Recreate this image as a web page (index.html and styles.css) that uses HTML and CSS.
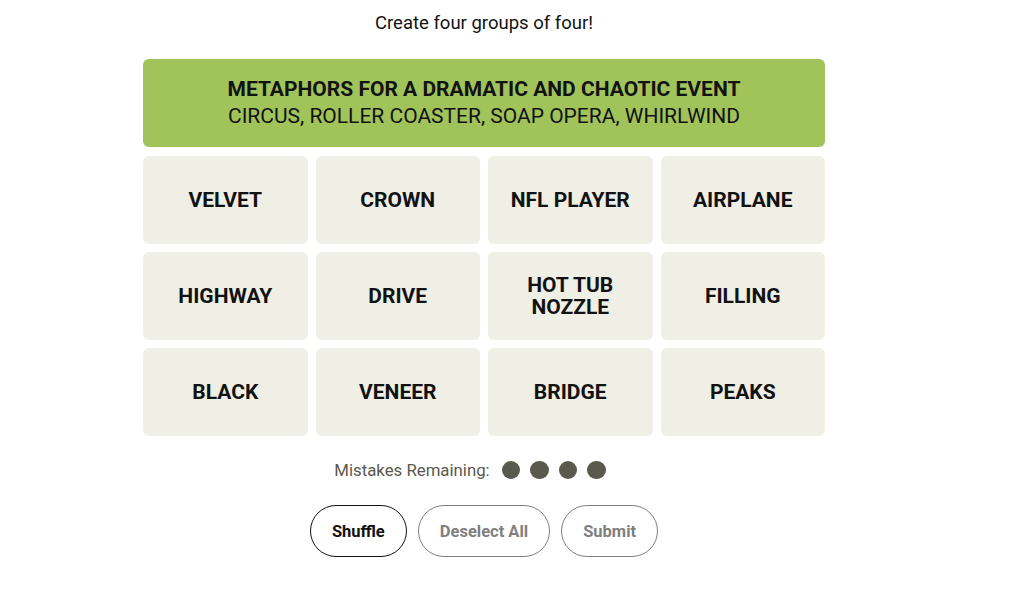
FILE: index.html
```html
<!DOCTYPE html>
<html lang="en">
<head>
  <meta charset="UTF-8">
  <meta name="viewport" content="width=device-width, initial-scale=1.0">
  <title>Connections</title>
  <link rel="stylesheet" href="styles.css">
</head>
<body>
  <div class="game">
    <p class="prompt">Create four groups of four!</p>

    <div class="board">
      <div class="solved">
        <div class="solved-title">METAPHORS FOR A DRAMATIC AND CHAOTIC EVENT</div>
        <div class="solved-words">CIRCUS, ROLLER COASTER, SOAP OPERA, WHIRLWIND</div>
      </div>

      <div class="cell">VELVET</div>
      <div class="cell">CROWN</div>
      <div class="cell">NFL PLAYER</div>
      <div class="cell">AIRPLANE</div>
      <div class="cell">HIGHWAY</div>
      <div class="cell">DRIVE</div>
      <div class="cell">HOT TUB NOZZLE</div>
      <div class="cell">FILLING</div>
      <div class="cell">BLACK</div>
      <div class="cell">VENEER</div>
      <div class="cell">BRIDGE</div>
      <div class="cell">PEAKS</div>
    </div>

    <div class="mistakes">
      <span>Mistakes Remaining:</span>
      <span class="dots">
        <span class="dot"></span>
        <span class="dot"></span>
        <span class="dot"></span>
        <span class="dot"></span>
      </span>
    </div>

    <div class="controls">
      <button class="btn active">Shuffle</button>
      <button class="btn">Deselect All</button>
      <button class="btn">Submit</button>
    </div>
  </div>
</body>
</html>
```

FILE: styles.css
```css
body {
  margin: 0;
  background: #fff;
  font-family: Roboto, "Liberation Sans", sans-serif;
  color: #121212;
}
.game {
  width: 968px;
  display: flex;
  flex-direction: column;
  align-items: center;
}
.prompt {
  margin: 12px 0 0;
  font-size: 18.5px;
  line-height: 22px;
}
.board {
  width: 682px;
  margin-top: 25px;
  display: grid;
  grid-template-columns: repeat(4, 1fr);
  gap: 8px;
}
.solved {
  grid-column: 1 / -1;
  height: 88px;
  margin-bottom: 1px;
  background: #a0c35a;
  border-radius: 6px;
  display: flex;
  flex-direction: column;
  justify-content: center;
  align-items: center;
  font-size: 21px;
  line-height: 27px;
}
.solved-title {
  font-weight: 700;
}
.cell {
  height: 88px;
  background: #efefe6;
  border-radius: 6px;
  display: flex;
  justify-content: center;
  align-items: center;
  text-align: center;
  font-size: 21px;
  font-weight: 700;
  line-height: 22px;
  padding: 0 12px;
}
.mistakes {
  margin-top: 24px;
  margin-right: 28px;
  display: flex;
  align-items: center;
  gap: 12px;
  font-size: 16.8px;
  color: #5a594e;
}
.dots {
  display: flex;
  gap: 10px;
}
.dot {
  width: 18.5px;
  height: 18.5px;
  border-radius: 50%;
  background: #5a594e;
}
.controls {
  margin-top: 25px;
  display: flex;
  gap: 11px;
}
.btn {
  height: 52px;
  padding: 0 21px;
  border: 1px solid #7f7f7f;
  border-radius: 26px;
  background: #fff;
  color: #7f7f7f;
  font-family: inherit;
  font-size: 16.5px;
  font-weight: 700;
}
.btn.active {
  border-color: #121212;
  color: #121212;
}
```
